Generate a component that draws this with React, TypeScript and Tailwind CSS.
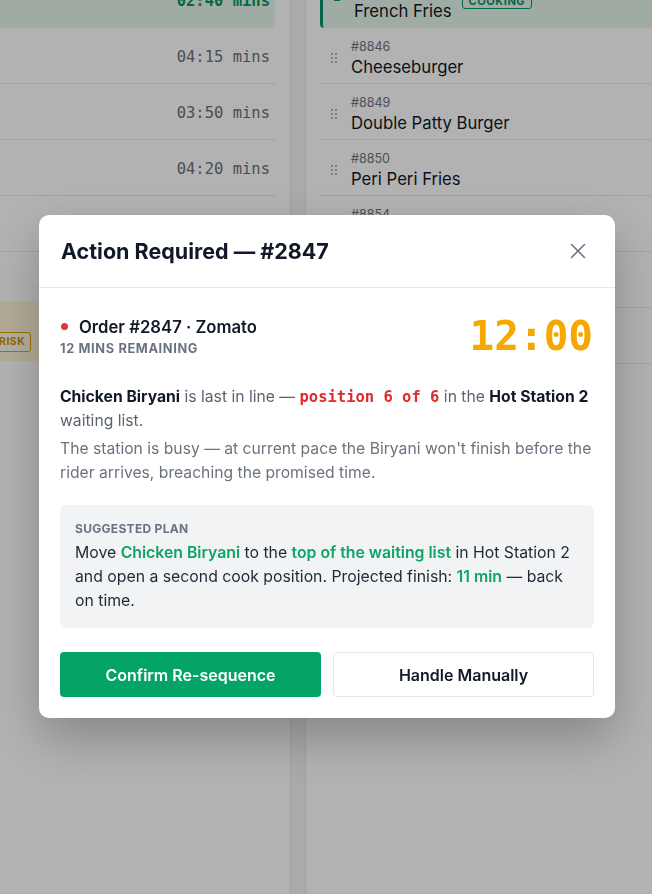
import { X } from "lucide-react";

const sans = { fontFamily: "Inter, 'Noto Sans', sans-serif" };

interface TimerRow {
  time: string;
}

interface QueueItem {
  ticket: string;
  name: string;
}

const timerRows: TimerRow[] = [
  { time: "04:15 mins" },
  { time: "03:50 mins" },
  { time: "04:20 mins" },
];

const queue: QueueItem[] = [
  { ticket: "#8846", name: "Cheeseburger" },
  { ticket: "#8849", name: "Double Patty Burger" },
  { ticket: "#8850", name: "Peri Peri Fries" },
  { ticket: "#8854", name: "Veg Wrap" },
  { ticket: "#8856", name: "Paneer Tikka" },
  { ticket: "#8857", name: "Masala Dosa" },
];

function DragHandle() {
  return (
    <div className="grid grid-cols-2 gap-[2px] w-[6px] mt-[14px]">
      {Array.from({ length: 6 }).map((_, i) => (
        <span key={i} className="w-[2px] h-[2px] rounded-full bg-gray-400" />
      ))}
    </div>
  );
}

function Background() {
  return (
    <div className="flex min-h-[894px] bg-white overflow-hidden" style={sans}>
      {/* left column: timers */}
      <div className="w-[290px] shrink-0 pr-[15px] -mt-[28px]">
        <div className="h-[56px] bg-[#e5f6ea] rounded-br-[6px] flex items-center justify-end pr-[5px] pt-[4px] font-['DejaVu_Sans_Mono',monospace] text-[15.5px] text-[#059669] font-semibold">
          02:40 mins
        </div>
        {timerRows.map((r) => (
          <div
            key={r.time}
            className="h-[56px] border-b border-gray-200 flex items-center justify-end pr-[5px] pt-[4px] font-['DejaVu_Sans_Mono',monospace] text-[15.5px] text-[#6b7079]"
          >
            {r.time}
          </div>
        ))}
        <div className="h-[56px] border-b border-gray-200" />
        <div className="h-[49px]" />
        <div className="h-[60px] bg-[#fff5d6] rounded-r-[6px] flex items-end pb-[9px]">
          <span className="ml-[-25px] px-[5px] py-[1px] border border-[#e8a400] rounded-[3px] text-[10.5px] font-bold tracking-wider text-[#d49500] bg-white/60">
            AT RISK
          </span>
        </div>
      </div>

      {/* divider strip */}
      <div className="w-[16px] shrink-0 bg-gray-100 border-x border-gray-200" />

      {/* right column: station queue */}
      <div className="flex-1 pl-[14px] -mt-[28px]">
        <div className="h-[56px] bg-[#e5f6ea] border-l-[3px] border-[#059669] rounded-bl-[4px] flex items-end pb-[5px] pl-[10px]">
          <span className="w-[8px] h-[6px] border-[1.5px] border-[#059669] rounded-[2px] mb-[22px] mr-[13px]" />
          <span className="text-[16.7px] text-gray-900 leading-6">French Fries</span>
          <span className="ml-[10px] mb-[14px] px-[6px] border border-[#059669] rounded-[3px] text-[11px] font-bold tracking-wider text-[#059669] leading-[14px]">
            COOKING
          </span>
        </div>
        {queue.map((q) => (
          <div key={q.ticket} className="h-[56px] border-b border-gray-200 flex items-start pl-[11px] pt-[11px]">
            <DragHandle />
            <div className="ml-[14px]">
              <div className="text-[12.5px] leading-4 text-gray-500">{q.ticket}</div>
              <div className="text-[16.7px] leading-6 text-gray-900">{q.name}</div>
            </div>
          </div>
        ))}
      </div>
    </div>
  );
}

function ActionModal() {
  return (
    <div className="w-[576px] ml-[39px] mt-[215px] bg-white rounded-[10px] shadow-[0_20px_50px_rgba(0,0,0,0.25)]" style={sans}>
      <div className="px-[22px] py-[22px] border-b border-gray-200 flex items-center justify-between">
        <h2 className="text-[21.5px] leading-7 font-bold text-[#111827]">Action Required — #2847</h2>
        <X className="w-[26px] h-[26px] text-gray-500 mr-[2px]" strokeWidth={1.4} />
      </div>

      <div className="px-[21px] pt-[26px] pb-[21px]">
        <div className="flex items-center justify-between">
          <div>
            <div className="flex items-center gap-[11px] pl-[1px]">
              <span className="w-[7px] h-[7px] rounded-full bg-[#e5343b]" />
              <span className="text-[16.7px] leading-6 font-semibold text-[#111827]">Order #2847 · Zomato</span>
            </div>
            <div className="mt-[2px] text-[12.8px] leading-4 font-bold tracking-wider text-gray-500">12 MINS REMAINING</div>
          </div>
          <div className="font-['DejaVu_Sans_Mono',monospace] text-[41px] leading-none font-semibold text-[#f5a800] pr-[1px] pt-[2px]">
            12:00
          </div>
        </div>

        <p className="mt-[28px] text-[15.7px] leading-6 text-[#5b6270]">
          <span className="font-bold text-[#111827]">Chicken Biryani</span> is last in line —{" "}
          <span className="font-['DejaVu_Sans_Mono',monospace] text-[15.5px] font-bold text-[#e02b2b]">position 6 of 6</span> in the{" "}
          <span className="font-bold text-[#111827]">Hot Station 2</span> waiting list.
        </p>
        <p className="mt-1 text-[15.7px] leading-6 text-[#6b7280]">
          The station is busy — at current pace the Biryani won't finish before the rider arrives, breaching the promised time.
        </p>

        <div className="mt-5 bg-[#f2f3f5] rounded-[6px] px-[15px] pt-4 pb-[15px]">
          <div className="text-[12px] leading-4 font-bold tracking-wide text-gray-500">SUGGESTED PLAN</div>
          <p className="mt-1 text-[15.8px] leading-6 text-[#1f2937]">
            Move <span className="font-semibold text-[#0ea463]">Chicken Biryani</span> to the{" "}
            <span className="font-semibold text-[#0ea463]">top of the waiting list</span> in Hot Station 2 and open a second
            cook position. Projected finish: <span className="font-semibold text-[#0ea463]">11 min</span> — back on time.
          </p>
        </div>

        <div className="mt-6 grid grid-cols-2 gap-3">
          <button className="h-[45px] rounded-[4px] bg-[#04a466] text-white text-[16px] font-semibold">
            Confirm Re-sequence
          </button>
          <button className="h-[45px] rounded-[4px] bg-white border border-gray-200 text-[#111827] text-[16px] font-semibold">
            Handle Manually
          </button>
        </div>
      </div>
    </div>
  );
}

export default function App() {
  return (
    <div className="relative w-[652px] h-[894px] overflow-hidden">
      <Background />
      <div className="fixed inset-0 bg-black/30">
        <ActionModal />
      </div>
    </div>
  );
}
